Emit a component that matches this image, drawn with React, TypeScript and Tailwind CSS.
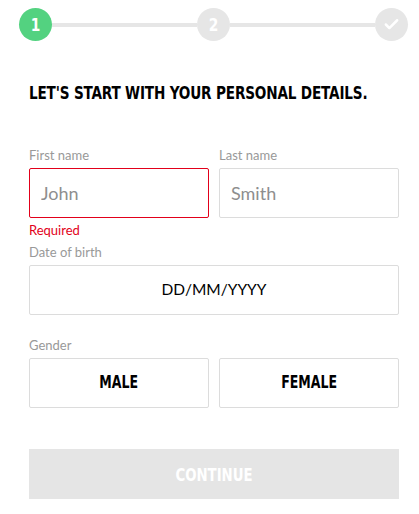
import { Check } from "lucide-react";

const condensed = "font-['DejaVu_Sans_Condensed','Liberation_Sans',sans-serif]";

function Narrow({ children, className = "" }: { children: React.ReactNode; className?: string }) {
	return (
		<span className={`inline-block whitespace-nowrap font-bold ${condensed} ${className}`}>
			{children}
		</span>
	);
}

function Step({ label, active }: { label: React.ReactNode; active?: boolean }) {
	return (
		<div
			className={`relative z-10 flex size-[33px] shrink-0 items-center justify-center rounded-full text-white ${
				active ? "bg-[#53d280]" : "bg-[#e6e6e6]"
			}`}
		>
			{label}
		</div>
	);
}

function Field({ label, children }: { label: string; children: React.ReactNode }) {
	return (
		<div className="flex flex-col">
			<label className="mb-[5px] text-[13px] leading-[16px] text-[#999]">{label}</label>
			{children}
		</div>
	);
}

export default function App() {
	return (
		<div className="min-h-[514px] bg-white font-['Lato','Noto_Sans',sans-serif]">
			<div className="flex items-center pl-[19px] pr-[11px] pt-[8px]">
				<Step label={<Narrow className="scale-x-[0.85] text-[18px]">1</Narrow>} active />
				<div className="h-[4px] flex-1 bg-[#e6e6e6]" />
				<Step label={<Narrow className="scale-x-[0.85] text-[18px]">2</Narrow>} />
				<div className="h-[4px] flex-1 bg-[#e6e6e6]" />
				<Step label={<Check className="size-[17px]" strokeWidth={3.5} />} />
			</div>

			<div className="pl-[29px] pr-[20px]">
				<h1 className="mt-[40px] h-[22px] text-black">
					<Narrow className="origin-left scale-x-[0.89] text-[17px] leading-[22px] tracking-[-0.2px]">
						LET'S START WITH YOUR PERSONAL DETAILS.
					</Narrow>
				</h1>

				<div className="mt-[44px] grid grid-cols-2 gap-[10px]">
					<Field label="First name">
						<input
							placeholder="John"
							className="h-[50px] rounded-[2px] border border-[#e2001a] px-[11px] text-[18px] text-black outline-none placeholder:text-[#8e8e8e]"
						/>
						<span className="mt-[4px] text-[13px] leading-[16px] text-[#e2001a]">Required</span>
					</Field>
					<Field label="Last name">
						<input
							placeholder="Smith"
							className="h-[50px] rounded-[2px] border border-[#dcdcdc] px-[11px] text-[18px] text-black outline-none placeholder:text-[#8e8e8e]"
						/>
					</Field>
				</div>

				<div className="mt-[6px]">
					<Field label="Date of birth">
						<div className="flex h-[50px] items-center justify-center rounded-[2px] border border-[#dcdcdc] text-[15.5px] text-black">
							DD/MM/YYYY
						</div>
					</Field>
				</div>

				<div className="mt-[22px]">
					<Field label="Gender">
						<div className="grid grid-cols-2 gap-[10px]">
							<button className="flex h-[50px] items-center justify-center rounded-[2px] border border-[#dcdcdc] text-black">
								<Narrow className="scale-x-[0.82] text-[17px]">MALE</Narrow>
							</button>
							<button className="flex h-[50px] items-center justify-center rounded-[2px] border border-[#dcdcdc] text-black">
								<Narrow className="scale-x-[0.82] text-[17px]">FEMALE</Narrow>
							</button>
						</div>
					</Field>
				</div>

				<button className="mt-[41px] flex h-[50px] w-full items-center justify-center bg-[#e5e5e5] text-white">
					<Narrow className="scale-x-[0.82] text-[18px]">CONTINUE</Narrow>
				</button>
			</div>
		</div>
	);
}
